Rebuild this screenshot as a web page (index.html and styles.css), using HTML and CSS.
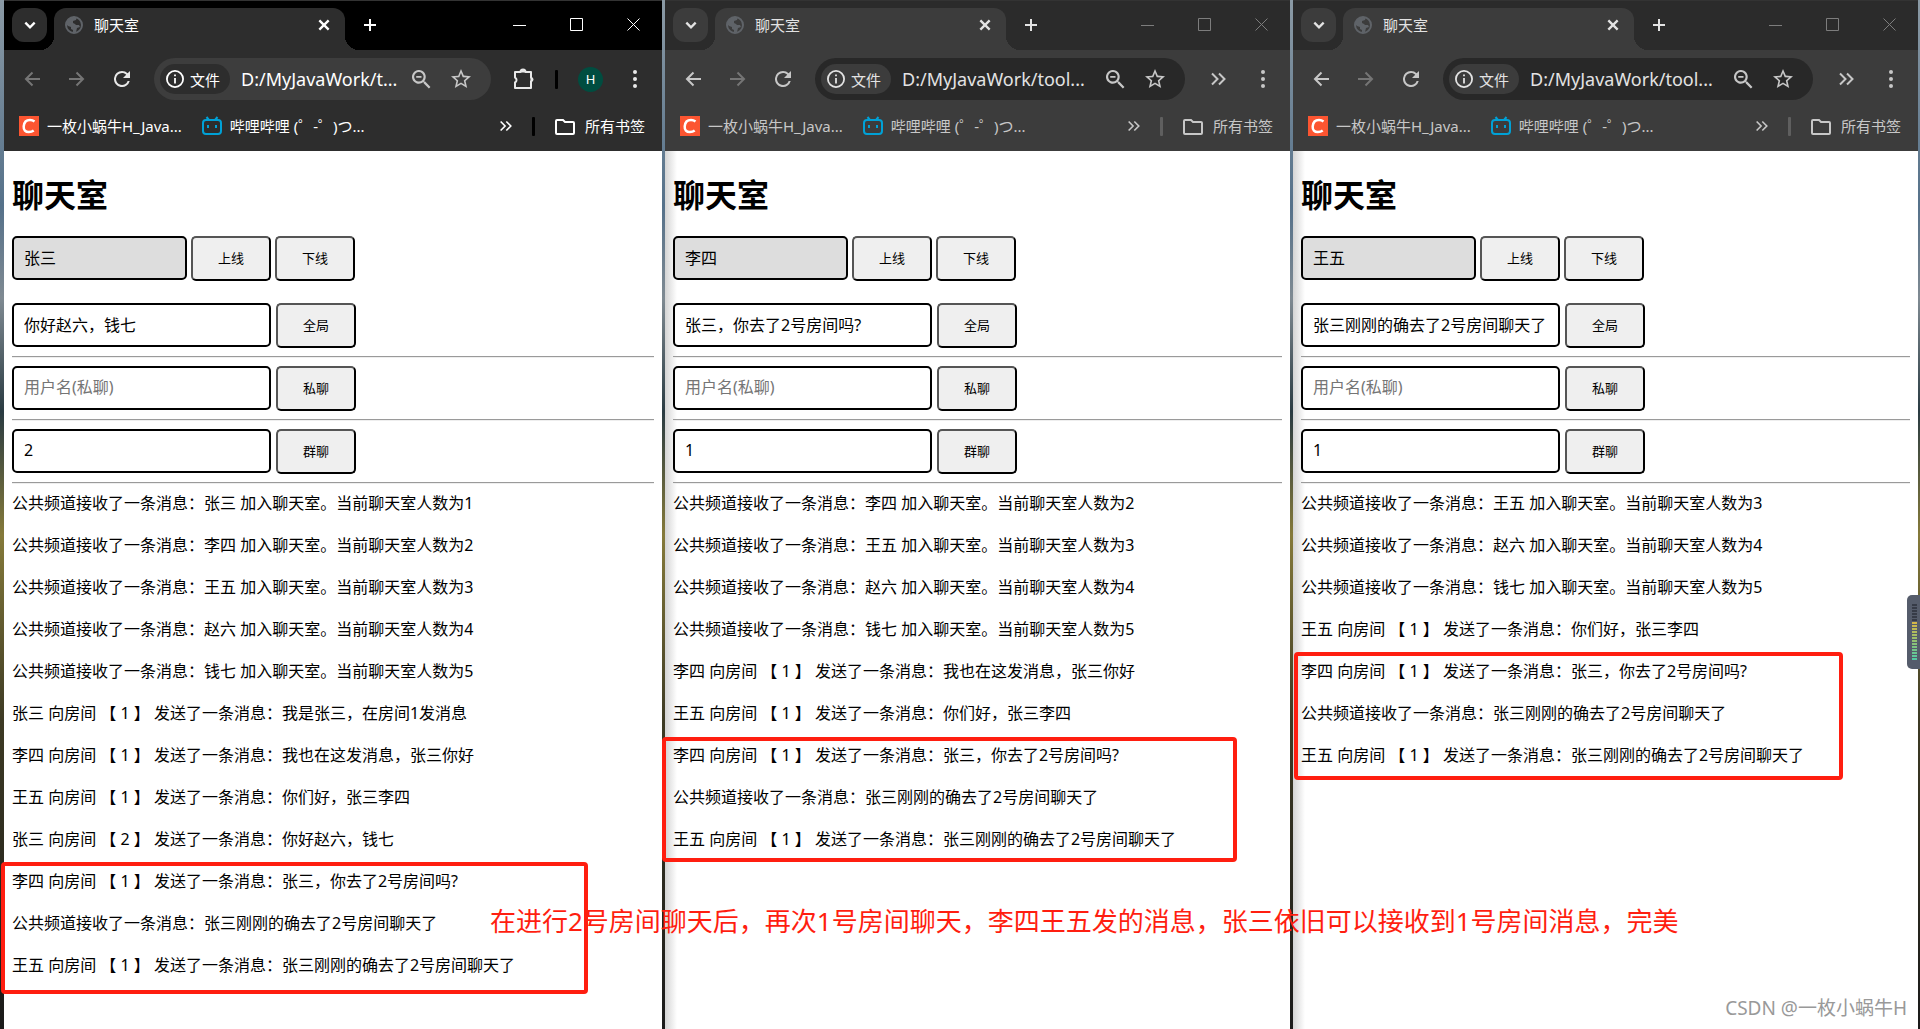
FILE: index.html
```html
<!DOCTYPE html>
<html lang="zh-CN">
<head>
<meta charset="utf-8">
<title>聊天室</title>
<link rel="stylesheet" href="styles.css">
</head>
<body>
<svg class="sprite" aria-hidden="true">
  <symbol id="i-chevron" viewBox="0 0 12 12"><path d="M2 4l4 4 4-4" fill="none" stroke="currentColor" stroke-width="2"/></symbol>
  <symbol id="i-globe" viewBox="0 0 18 18"><circle cx="9" cy="9" r="8" fill="none" stroke="#5f6368" stroke-width="2"/><path d="M2 5L6 1h6L11 4 8 5v2l2 1 1 1h3l1 2-3 1-1 4-3 1v-3L6 13v-2L3 10 1 8z" fill="#5f6368"/></symbol>
  <symbol id="i-x" viewBox="0 0 12 12"><path d="M2 2l8 8M10 2l-8 8" fill="none" stroke="currentColor" stroke-width="2"/></symbol>
  <symbol id="i-plus" viewBox="0 0 14 14"><path d="M7 1v12M1 7h12" fill="none" stroke="currentColor" stroke-width="2"/></symbol>
  <symbol id="i-min" viewBox="0 0 14 14"><path d="M0 7.500h13" stroke="currentColor"/></symbol>
  <symbol id="i-max" viewBox="0 0 14 14"><path d="M.5.500h12v12H.500z" fill="none" stroke="currentColor"/></symbol>
  <symbol id="i-close" viewBox="0 0 14 14"><path d="M.5.500l12 12M12.500.500l-12 12" fill="none" stroke="currentColor"/></symbol>
  <symbol id="i-back" viewBox="0 0 16 16"><path d="M16 8H2M8.500 1.500L2 8l6.500 6.500" fill="none" stroke="currentColor" stroke-width="2"/></symbol>
  <symbol id="i-fwd" viewBox="0 0 16 16"><path d="M0 8h14M7.500 1.500L14 8l-6.500 6.500" fill="none" stroke="currentColor" stroke-width="2"/></symbol>
  <symbol id="i-reload" viewBox="4 4 16 16"><path d="M17.650 6.350A7.960 7.960 0 0 0 12 4a8 8 0 1 0 7.730 10h-2.080A6 6 0 1 1 12 6c1.660 0 3.140.690 4.220 1.780L13 11h7V4z" fill="currentColor"/></symbol>
  <symbol id="i-info" viewBox="2 2 20 20"><path d="M11 7h2v2h-2zm0 4h2v6h-2zm1-9a10 10 0 1 0 0 20 10 10 0 0 0 0-20zm0 18a8 8 0 1 1 0-16 8 8 0 0 1 0 16z" fill="currentColor"/></symbol>
  <symbol id="i-zoom" viewBox="3 3 18 18"><path d="M15.500 14h-.790l-.280-.270A6.500 6.500 0 1 0 13.730 14.430l.270.280v.790l5 4.990L20.490 19zm-6 0a4.500 4.500 0 1 1 0-9 4.500 4.500 0 0 1 0 9zM7 8.700h5v1.600H7z" fill="currentColor"/></symbol>
  <symbol id="i-star" viewBox="2 2 20 20"><path d="M22 9.240l-7.190-.620L12 2 9.190 8.630 2 9.240l5.460 4.730L5.820 21 12 17.270 18.180 21l-1.630-7.030zM12 15.400l-3.760 2.270 1-4.280-3.320-2.880 4.380-.380L12 6.100l1.710 4.040 4.380.380-3.320 2.880 1 4.280z" fill="currentColor"/></symbol>
  <symbol id="i-ext" viewBox="0 0 22 22"><path d="M2 4h5.500a2.500 2.500 0 0 1 5 0H18v5.500a2.500 2.500 0 0 1 0 4V20H2v-5.500a2.800 2.800 0 0 0 0-5z" fill="none" stroke="currentColor" stroke-width="2" stroke-linejoin="round"/><path d="M8 4a2 2 0 0 1 4 0zM18 9.500a2 2 0 0 1 0 4z" fill="currentColor" stroke="currentColor"/></symbol>
  <symbol id="i-dots" viewBox="0 0 6 20"><circle cx="3" cy="3" r="2"/><circle cx="3" cy="10" r="2"/><circle cx="3" cy="17" r="2"/></symbol>
  <symbol id="i-more" viewBox="0 0 16 14"><path d="M2 1.500L7.500 7 2 12.500M9 1.500L14.500 7 9 12.500" fill="none" stroke="currentColor" stroke-width="2"/></symbol>
  <symbol id="i-folder" viewBox="0 0 20 17"><path d="M2 2h6l2 2h8q1 0 1 1v10q0 1-1 1H2q-1 0-1-1V3q0-1 1-1z" fill="none" stroke="currentColor" stroke-width="2"/></symbol>
  <symbol id="i-csdn" viewBox="0 0 20 20"><path d="M0 0h20v20H0z" fill="#fc5531"/><path d="M15.500 5.500C14 4.300 12.500 4 11 4 7 4 5 6.700 4.700 10.300 4.400 14 6.500 16 9.800 16c1.800 0 3.500-.4 4.900-1.500" fill="none" stroke="#fff" stroke-width="2.500"/></symbol>
  <symbol id="i-bili" viewBox="0 0 20 20"><path d="M4.500 1l2.500 3M15.500 1L13 4" stroke="#00a1d6" stroke-width="2"/><rect x="1" y="4" width="18" height="14" rx="3" fill="none" stroke="#00a1d6" stroke-width="2"/><path d="M6 9v3M14 9v3" stroke="#00a1d6" stroke-width="2"/></symbol>
</svg>

<main class="desktop">
  <section class="window active">
    <header class="chrome">
      <div class="tabs">
        <button class="tab-search" aria-label="搜索标签页"><svg width="14" height="14"><use href="#i-chevron"/></svg></button>
        <div class="tab">
          <svg width="18" height="18"><use href="#i-globe"/></svg><span class="tab-title">聊天室</span>
          <button class="icon" aria-label="关闭标签页"><svg width="14" height="14"><use href="#i-x"/></svg></button>
        </div>
        <button class="icon new-tab" aria-label="新标签页"><svg width="14" height="14"><use href="#i-plus"/></svg></button>
        <div class="controls">
          <button class="icon" aria-label="最小化"><svg width="14" height="14"><use href="#i-min"/></svg></button>
          <button class="icon" aria-label="最大化"><svg width="14" height="14"><use href="#i-max"/></svg></button>
          <button class="icon" aria-label="关闭"><svg width="14" height="14"><use href="#i-close"/></svg></button>
        </div>
      </div>
      <div class="toolbar">
        <div class="nav">
          <button class="icon dim" aria-label="后退"><svg width="16" height="16"><use href="#i-back"/></svg></button>
          <button class="icon dim" aria-label="前进"><svg width="16" height="16"><use href="#i-fwd"/></svg></button>
          <button class="icon" aria-label="刷新"><svg width="16" height="16"><use href="#i-reload"/></svg></button>
        </div>
        <div class="omnibox">
          <button class="chip"><svg width="18" height="18"><use href="#i-info"/></svg>文件</button>
          <input class="url" aria-label="地址" value="D:/MyJavaWork/t...">
          <button class="icon" aria-label="缩放"><svg width="19" height="19"><use href="#i-zoom"/></svg></button>
          <button class="icon" aria-label="收藏"><svg width="20" height="20"><use href="#i-star"/></svg></button>
        </div>
        <div class="tools">
          <button class="icon" aria-label="扩展程序"><svg width="22" height="22"><use href="#i-ext"/></svg></button>
          <span class="divider"></span>
          <button class="avatar" aria-label="个人资料">H</button>
          <button class="icon" aria-label="菜单"><svg width="6" height="20"><use href="#i-dots"/></svg></button>
        </div>
      </div>
      <nav class="bookmarks">
        <a href="#"><svg width="20" height="20"><use href="#i-csdn"/></svg>一枚小蜗牛H_Java...</a>
        <a href="#"><svg width="20" height="20"><use href="#i-bili"/></svg>哔哩哔哩 (゜-゜)つ...</a>
        <button class="icon overflow" aria-label="更多书签"><svg width="13" height="12"><use href="#i-more"/></svg></button>
        <span class="divider"></span>
        <a href="#"><svg width="20" height="17"><use href="#i-folder"/></svg>所有书签</a>
      </nav>
    </header>
    <div class="page">
      <h1>聊天室</h1>
      <div class="row login"><input class="field name" aria-label="用户名" value="张三" disabled><button class="btn">上线</button><button class="btn">下线</button></div>
      <div class="row global"><input class="field" aria-label="全局消息" value="你好赵六，钱七"><button class="btn">全局</button></div>
      <hr>
      <div class="row"><input class="field" aria-label="用户名(私聊)" placeholder="用户名(私聊)"><button class="btn">私聊</button></div>
      <hr>
      <div class="row"><input class="field" aria-label="房间号" value="2"><button class="btn">群聊</button></div>
      <hr>
      <div class="messages">
        <p>公共频道接收了一条消息：张三 加入聊天室。当前聊天室人数为1</p>
        <p>公共频道接收了一条消息：李四 加入聊天室。当前聊天室人数为2</p>
        <p>公共频道接收了一条消息：王五 加入聊天室。当前聊天室人数为3</p>
        <p>公共频道接收了一条消息：赵六 加入聊天室。当前聊天室人数为4</p>
        <p>公共频道接收了一条消息：钱七 加入聊天室。当前聊天室人数为5</p>
        <p>张三 向房间 【 1 】 发送了一条消息：我是张三，在房间1发消息</p>
        <p>李四 向房间 【 1 】 发送了一条消息：我也在这发消息，张三你好</p>
        <p>王五 向房间 【 1 】 发送了一条消息：你们好，张三李四</p>
        <p>张三 向房间 【 2 】 发送了一条消息：你好赵六，钱七</p>
        <p>李四 向房间 【 1 】 发送了一条消息：张三，你去了2号房间吗?</p>
        <p>公共频道接收了一条消息：张三刚刚的确去了2号房间聊天了</p>
        <p>王五 向房间 【 1 】 发送了一条消息：张三刚刚的确去了2号房间聊天了</p>
      </div>
    </div>
  </section>

  <section class="window">
    <header class="chrome">
      <div class="tabs">
        <button class="tab-search" aria-label="搜索标签页"><svg width="14" height="14"><use href="#i-chevron"/></svg></button>
        <div class="tab">
          <svg width="18" height="18"><use href="#i-globe"/></svg><span class="tab-title">聊天室</span>
          <button class="icon" aria-label="关闭标签页"><svg width="14" height="14"><use href="#i-x"/></svg></button>
        </div>
        <button class="icon new-tab" aria-label="新标签页"><svg width="14" height="14"><use href="#i-plus"/></svg></button>
        <div class="controls">
          <button class="icon" aria-label="最小化"><svg width="14" height="14"><use href="#i-min"/></svg></button>
          <button class="icon" aria-label="最大化"><svg width="14" height="14"><use href="#i-max"/></svg></button>
          <button class="icon" aria-label="关闭"><svg width="14" height="14"><use href="#i-close"/></svg></button>
        </div>
      </div>
      <div class="toolbar">
        <div class="nav">
          <button class="icon" aria-label="后退"><svg width="16" height="16"><use href="#i-back"/></svg></button>
          <button class="icon dim" aria-label="前进"><svg width="16" height="16"><use href="#i-fwd"/></svg></button>
          <button class="icon" aria-label="刷新"><svg width="16" height="16"><use href="#i-reload"/></svg></button>
        </div>
        <div class="omnibox">
          <button class="chip"><svg width="18" height="18"><use href="#i-info"/></svg>文件</button>
          <input class="url" aria-label="地址" value="D:/MyJavaWork/tool...">
          <button class="icon" aria-label="缩放"><svg width="19" height="19"><use href="#i-zoom"/></svg></button>
          <button class="icon" aria-label="收藏"><svg width="20" height="20"><use href="#i-star"/></svg></button>
        </div>
        <div class="tools">
          <button class="icon" aria-label="更多工具"><svg width="16" height="14"><use href="#i-more"/></svg></button>
          <button class="icon" aria-label="菜单"><svg width="6" height="20"><use href="#i-dots"/></svg></button>
        </div>
      </div>
      <nav class="bookmarks">
        <a href="#"><svg width="20" height="20"><use href="#i-csdn"/></svg>一枚小蜗牛H_Java...</a>
        <a href="#"><svg width="20" height="20"><use href="#i-bili"/></svg>哔哩哔哩 (゜-゜)つ...</a>
        <button class="icon overflow" aria-label="更多书签"><svg width="13" height="12"><use href="#i-more"/></svg></button>
        <span class="divider"></span>
        <a href="#"><svg width="20" height="17"><use href="#i-folder"/></svg>所有书签</a>
      </nav>
    </header>
    <div class="page">
      <h1>聊天室</h1>
      <div class="row login"><input class="field name" aria-label="用户名" value="李四" disabled><button class="btn">上线</button><button class="btn">下线</button></div>
      <div class="row global"><input class="field" aria-label="全局消息" value="张三，你去了2号房间吗?"><button class="btn">全局</button></div>
      <hr>
      <div class="row"><input class="field" aria-label="用户名(私聊)" placeholder="用户名(私聊)"><button class="btn">私聊</button></div>
      <hr>
      <div class="row"><input class="field" aria-label="房间号" value="1"><button class="btn">群聊</button></div>
      <hr>
      <div class="messages">
        <p>公共频道接收了一条消息：李四 加入聊天室。当前聊天室人数为2</p>
        <p>公共频道接收了一条消息：王五 加入聊天室。当前聊天室人数为3</p>
        <p>公共频道接收了一条消息：赵六 加入聊天室。当前聊天室人数为4</p>
        <p>公共频道接收了一条消息：钱七 加入聊天室。当前聊天室人数为5</p>
        <p>李四 向房间 【 1 】 发送了一条消息：我也在这发消息，张三你好</p>
        <p>王五 向房间 【 1 】 发送了一条消息：你们好，张三李四</p>
        <p>李四 向房间 【 1 】 发送了一条消息：张三，你去了2号房间吗?</p>
        <p>公共频道接收了一条消息：张三刚刚的确去了2号房间聊天了</p>
        <p>王五 向房间 【 1 】 发送了一条消息：张三刚刚的确去了2号房间聊天了</p>
      </div>
    </div>
  </section>

  <section class="window">
    <header class="chrome">
      <div class="tabs">
        <button class="tab-search" aria-label="搜索标签页"><svg width="14" height="14"><use href="#i-chevron"/></svg></button>
        <div class="tab">
          <svg width="18" height="18"><use href="#i-globe"/></svg><span class="tab-title">聊天室</span>
          <button class="icon" aria-label="关闭标签页"><svg width="14" height="14"><use href="#i-x"/></svg></button>
        </div>
        <button class="icon new-tab" aria-label="新标签页"><svg width="14" height="14"><use href="#i-plus"/></svg></button>
        <div class="controls">
          <button class="icon" aria-label="最小化"><svg width="14" height="14"><use href="#i-min"/></svg></button>
          <button class="icon" aria-label="最大化"><svg width="14" height="14"><use href="#i-max"/></svg></button>
          <button class="icon" aria-label="关闭"><svg width="14" height="14"><use href="#i-close"/></svg></button>
        </div>
      </div>
      <div class="toolbar">
        <div class="nav">
          <button class="icon" aria-label="后退"><svg width="16" height="16"><use href="#i-back"/></svg></button>
          <button class="icon dim" aria-label="前进"><svg width="16" height="16"><use href="#i-fwd"/></svg></button>
          <button class="icon" aria-label="刷新"><svg width="16" height="16"><use href="#i-reload"/></svg></button>
        </div>
        <div class="omnibox">
          <button class="chip"><svg width="18" height="18"><use href="#i-info"/></svg>文件</button>
          <input class="url" aria-label="地址" value="D:/MyJavaWork/tool...">
          <button class="icon" aria-label="缩放"><svg width="19" height="19"><use href="#i-zoom"/></svg></button>
          <button class="icon" aria-label="收藏"><svg width="20" height="20"><use href="#i-star"/></svg></button>
        </div>
        <div class="tools">
          <button class="icon" aria-label="更多工具"><svg width="16" height="14"><use href="#i-more"/></svg></button>
          <button class="icon" aria-label="菜单"><svg width="6" height="20"><use href="#i-dots"/></svg></button>
        </div>
      </div>
      <nav class="bookmarks">
        <a href="#"><svg width="20" height="20"><use href="#i-csdn"/></svg>一枚小蜗牛H_Java...</a>
        <a href="#"><svg width="20" height="20"><use href="#i-bili"/></svg>哔哩哔哩 (゜-゜)つ...</a>
        <button class="icon overflow" aria-label="更多书签"><svg width="13" height="12"><use href="#i-more"/></svg></button>
        <span class="divider"></span>
        <a href="#"><svg width="20" height="17"><use href="#i-folder"/></svg>所有书签</a>
      </nav>
    </header>
    <div class="page">
      <h1>聊天室</h1>
      <div class="row login"><input class="field name" aria-label="用户名" value="王五" disabled><button class="btn">上线</button><button class="btn">下线</button></div>
      <div class="row global"><input class="field" aria-label="全局消息" value="张三刚刚的确去了2号房间聊天了"><button class="btn">全局</button></div>
      <hr>
      <div class="row"><input class="field" aria-label="用户名(私聊)" placeholder="用户名(私聊)"><button class="btn">私聊</button></div>
      <hr>
      <div class="row"><input class="field" aria-label="房间号" value="1"><button class="btn">群聊</button></div>
      <hr>
      <div class="messages">
        <p>公共频道接收了一条消息：王五 加入聊天室。当前聊天室人数为3</p>
        <p>公共频道接收了一条消息：赵六 加入聊天室。当前聊天室人数为4</p>
        <p>公共频道接收了一条消息：钱七 加入聊天室。当前聊天室人数为5</p>
        <p>王五 向房间 【 1 】 发送了一条消息：你们好，张三李四</p>
        <p>李四 向房间 【 1 】 发送了一条消息：张三，你去了2号房间吗?</p>
        <p>公共频道接收了一条消息：张三刚刚的确去了2号房间聊天了</p>
        <p>王五 向房间 【 1 】 发送了一条消息：张三刚刚的确去了2号房间聊天了</p>
      </div>
    </div>
  </section>

  <div class="mark mark-one"></div>
  <div class="mark mark-two"></div>
  <div class="mark mark-three"></div>
  <p class="note">在进行2号房间聊天后，再次1号房间聊天，李四王五发的消息，张三依旧可以接收到1号房间消息，完美</p>
  <div class="meter"><span class="meter-bars"></span></div>
  <p class="watermark">CSDN @一枚小蜗牛H</p>
</main>
</body>
</html>
```
FILE: styles.css
```css
* { box-sizing: border-box; }

body {
  margin: 0;
  font: 16px/22px "Noto Sans", "Noto Sans CJK SC", sans-serif;
  color: #000;
  text-spacing-trim: space-all;
}

svg { display: block; flex: none; }
.sprite { position: absolute; width: 0; height: 0; }
button, input { font-family: inherit; }
p { margin: 0; }

.desktop {
  position: relative;
  display: grid;
  grid-template-columns: 658fr 625fr 625fr;
  gap: 3px;
  min-height: 100vh;
  padding: 0 2px 0 4px;
  overflow: hidden;
  background: linear-gradient(#8b9aa5, #55718a 20%, #7f8a92 29%, #2a3b42 40%, #857a3a 52%, #3d3a24 70%, #1a1a1a);
}

/* Browser windows */
.window {
  --strip: #2b2b2b;
  --bar: #3c3c3c;
  --box: #282828;
  --chip: #3c3c3c;
  --search: #3c3c3c;
  --ink: #e3e3e3;
  --soft: #c7c7c7;
  --control: #7d7d7d;
  --line: #5f5f5f;
  display: flex;
  flex-direction: column;
  min-width: 0;
}
.window.active {
  --strip: #000;
  --bar: #2d2d2d;
  --box: #3d3d3d;
  --chip: #2d2d2d;
  --search: #2d2d2d;
  --ink: #fff;
  --soft: #e8e8e8;
  --control: #fff;
  --line: #000;
}

.chrome {
  background: var(--bar);
  color: var(--soft);
  font-size: 15px;
  line-height: 20px;
}
.icon {
  display: flex;
  align-items: center;
  justify-content: center;
  padding: 0;
  border: 0;
  background: none;
  color: inherit;
  fill: currentColor;
}
.dim { color: #757575; }

.tabs {
  display: flex;
  height: 50px;
  padding: 7px 0 0 8px;
  border-top: 1px solid #333;
  background: var(--strip);
  color: var(--ink);
}
.tab-search {
  display: flex;
  align-items: center;
  justify-content: center;
  width: 35px;
  height: 34px;
  margin-right: 7px;
  padding: 0;
  border: 0;
  border-radius: 12px;
  background: var(--search);
  color: var(--ink);
}
.tab {
  position: relative;
  display: flex;
  align-items: center;
  width: 291px;
  padding: 0 14px 8px 11px;
  border-radius: 12px 12px 0 0;
  background: var(--bar);
}
.tab::before,
.tab::after {
  content: "";
  position: absolute;
  bottom: 0;
  width: 14px;
  height: 14px;
}
.tab::before { right: 100%; background: radial-gradient(circle at 0 0, transparent 14px, var(--bar) 14px); }
.tab::after { left: 100%; background: radial-gradient(circle at 100% 0, transparent 14px, var(--bar) 14px); }
.tab-title { flex: 1; margin-left: 11px; }
.new-tab { width: 49px; padding-bottom: 8px; }
.controls {
  display: flex;
  margin-left: auto;
  padding-bottom: 8px;
  color: var(--control);
}
.controls .icon { width: 57px; }

.toolbar {
  display: flex;
  align-items: center;
  height: 58px;
  padding: 0 12px 0 5px;
}
.nav { display: flex; margin-right: 10px; }
.nav .icon { width: 45px; height: 40px; }
.omnibox {
  display: flex;
  flex: 1;
  align-items: center;
  min-width: 0;
  height: 42px;
  padding: 0 10px 0 6px;
  border-radius: 21px;
  background: var(--box);
}
.omnibox .icon { width: 40px; height: 34px; color: #c7c7c7; }
.chip {
  display: flex;
  align-items: center;
  gap: 6px;
  flex: none;
  height: 30px;
  padding: 0 10px 0 6px;
  border: 0;
  border-radius: 15px;
  background: var(--chip);
  color: var(--ink);
  font-size: 15px;
}
.url {
  flex: 1;
  width: 0;
  min-width: 0;
  height: 34px;
  margin-left: 11px;
  padding: 0;
  border: 0;
  background: none;
  color: var(--ink);
  font-size: 18px;
}
.tools { display: flex; align-items: center; margin-left: 10px; }
.tools .icon { width: 45px; height: 40px; }
.tools .icon:last-child { width: 30px; margin-left: 8px; }
.active .tools .icon:last-child { margin-left: 17px; }
.divider { width: 3px; height: 19px; border-radius: 1px; background: var(--line); }
.active .tools .divider { margin: 0 20px 0 9px; }
.avatar {
  width: 25px;
  height: 25px;
  padding: 0;
  border: 0;
  border-radius: 50%;
  background: #004d40;
  color: #fff;
  font-size: 13px;
}

.bookmarks {
  display: flex;
  align-items: center;
  height: 43px;
  padding: 0 17px 7px 15px;
}
.active .bookmarks { color: #fff; }
.bookmarks a {
  display: flex;
  align-items: center;
  gap: 8px;
  margin-right: 20px;
  color: inherit;
  text-decoration: none;
  white-space: nowrap;
}
.bookmarks a:last-child { gap: 10px; margin-right: 0; }
.overflow { margin-left: auto; }
.bookmarks .divider { margin: 0 20px; }

/* Chat page */
.page {
  flex: 1;
  padding: 22px 8px;
  background: linear-gradient(to right, #d4d4d4, #fff 12px);
}
.active .page { background: #fff; }
h1 { margin: 0 0 19px; font-size: 32px; line-height: 44px; }
.row { display: flex; align-items: flex-start; gap: 5px; }
.login { gap: 4px; }
.global { margin-top: 22px; }
.field {
  width: 259px;
  height: 44px;
  padding: 0 10px 2px;
  border: 2px solid #000;
  border-radius: 5px;
  background: #fff;
  color: #000;
  font-size: 16px;
}
.field::placeholder { color: #757575; }
.name { width: 175px; background: #ddd; }
.btn {
  width: 80px;
  height: 45px;
  padding: 0 0 2px;
  border: 2px solid;
  border-color: #555 #000 #000 #555;
  border-radius: 5px;
  background: #efefef;
  color: #000;
  font-size: 13px;
}
hr {
  height: 2px;
  margin: 8px 0;
  border: 0;
  border-top: 1px solid #9a9a9a;
  border-bottom: 1px solid #eee;
}
.messages {
  display: flex;
  flex-direction: column;
  gap: 20px;
  white-space: nowrap;
}

/* Annotations over the windows */
.mark {
  position: absolute;
  border: 4px solid #ff1e10;
  border-radius: 4px;
}
.mark-one { left: 1px; top: 862px; width: 587px; height: 132px; }
.mark-two { left: 662px; top: 737px; width: 575px; height: 125px; }
.mark-three { left: 1294px; top: 652px; width: 549px; height: 128px; }
.note {
  position: absolute;
  left: 490px;
  top: 902px;
  color: #ff1e10;
  font-size: 26px;
  line-height: 38px;
  white-space: nowrap;
}
.meter {
  position: absolute;
  right: 0;
  top: 595px;
  width: 13px;
  height: 74px;
  padding: 9px 3px 8px 5px;
  border-radius: 5px 0 0 5px;
  background: #555c6b;
}
.meter-bars {
  display: block;
  height: 100%;
  background:
    repeating-linear-gradient(transparent 0 2px, #555c6b 2px 3px),
    linear-gradient(#363b47 30%, #d9b545 30%, #9cc06a 60%, #4ecba8);
}
.watermark {
  position: absolute;
  right: 13px;
  top: 997px;
  color: #999;
  font-size: 19px;
}
```
